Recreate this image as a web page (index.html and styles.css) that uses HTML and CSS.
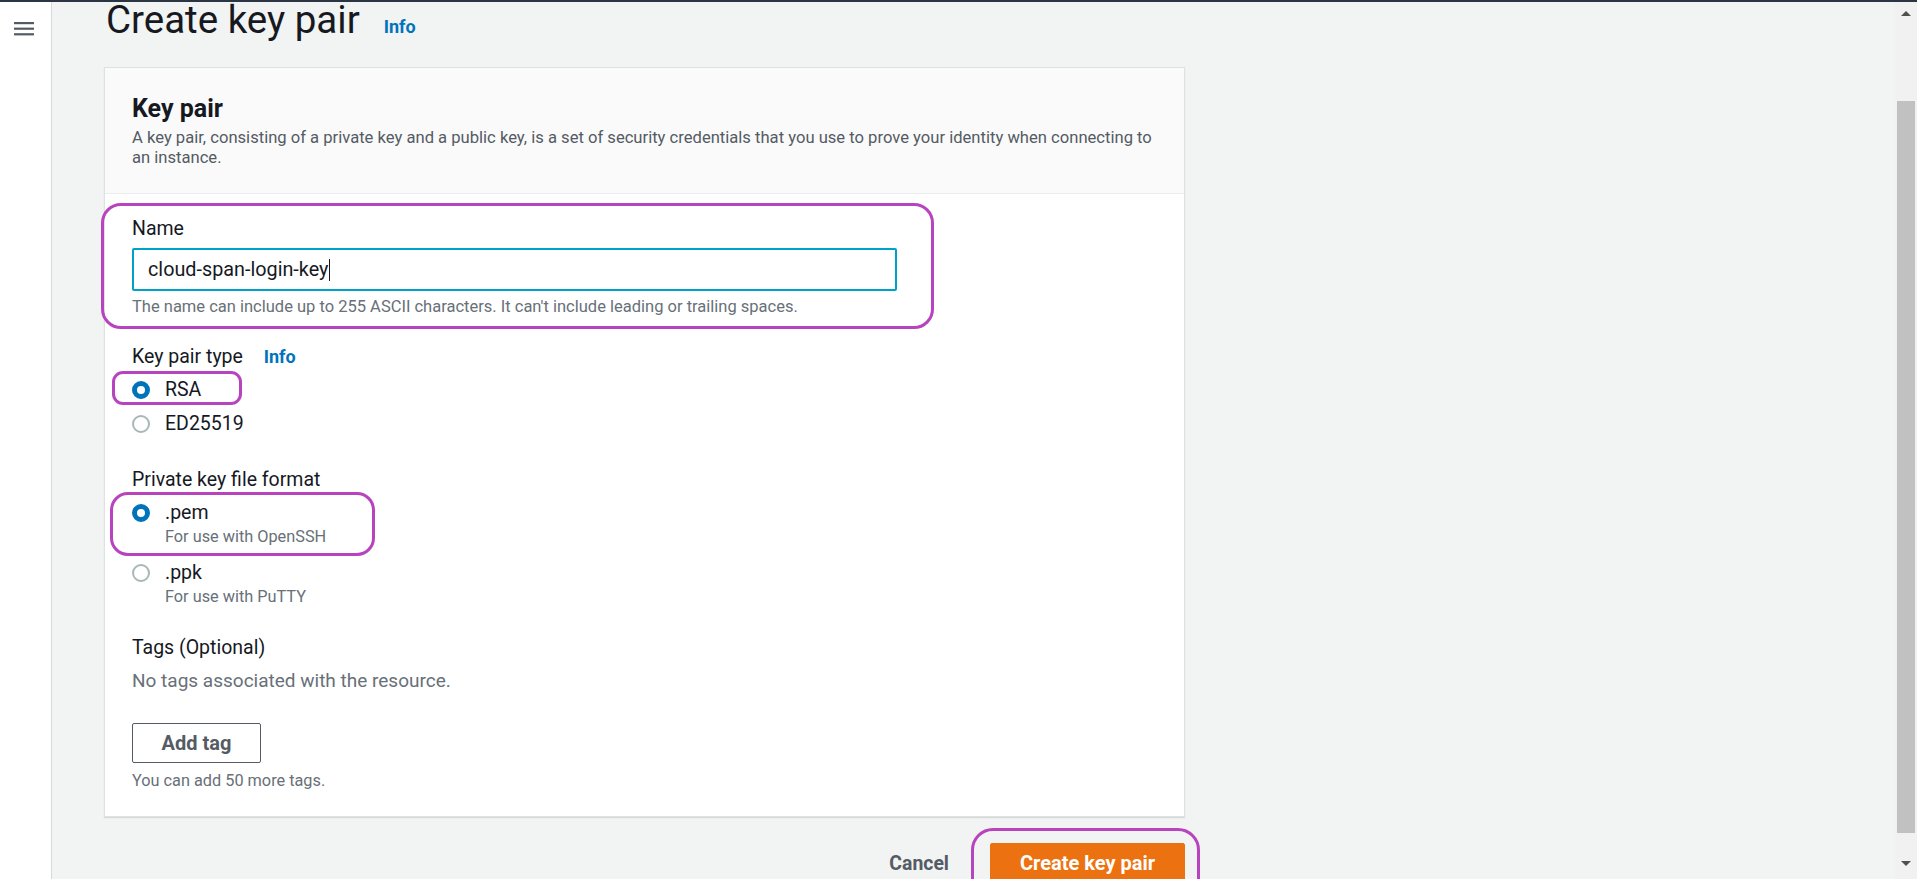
FILE: index.html
```html
<!DOCTYPE html>
<html lang="en">
<head>
<meta charset="utf-8">
<title>Create key pair</title>
<link rel="stylesheet" href="styles.css">
</head>
<body>
<div class="topbar"></div>
<div class="app">
  <nav class="sidebar">
    <svg class="burger" width="20" height="16" viewBox="0 0 20 16" aria-hidden="true">
      <rect x="0" y="1" width="20" height="2.2" fill="#545b64"/>
      <rect x="0" y="6.6" width="20" height="2.2" fill="#545b64"/>
      <rect x="0" y="12.2" width="20" height="2.2" fill="#545b64"/>
    </svg>
  </nav>
  <main class="main">
    <div class="page-head">
      <h1 class="page-title">Create key pair</h1>
      <a class="info" href="#">Info</a>
    </div>
    <section class="card">
      <header class="card-head">
        <h2 class="card-title">Key pair</h2>
        <p class="card-desc">A key pair, consisting of a private key and a public key, is a set of security credentials that you use to prove your identity when connecting to an instance.</p>
      </header>
      <div class="card-body">
        <div class="field field-name">
          <span class="mark mark-name"></span>
          <div class="label">Name</div>
          <div class="input"><span class="input-text">cloud-span-login-key</span><span class="caret"></span></div>
          <p class="hint">The name can include up to 255 ASCII characters. It can't include leading or trailing spaces.</p>
        </div>

        <div class="field field-type">
          <div class="label">Key pair type <a class="info info-small" href="#">Info</a></div>
          <div class="radios">
            <div class="radio-row">
              <span class="mark mark-rsa"></span>
              <span class="radio checked"></span><span class="radio-label">RSA</span>
            </div>
            <div class="radio-row">
              <span class="radio"></span><span class="radio-label">ED25519</span>
            </div>
          </div>
        </div>

        <div class="field field-format">
          <div class="label">Private key file format</div>
          <div class="radios">
            <div class="radio-row radio-tall">
              <span class="mark mark-pem"></span>
              <span class="radio checked"></span>
              <div class="radio-text"><span class="radio-label">.pem</span><span class="radio-desc">For use with OpenSSH</span></div>
            </div>
            <div class="radio-row radio-tall radio-second">
              <span class="radio"></span>
              <div class="radio-text"><span class="radio-label">.ppk</span><span class="radio-desc">For use with PuTTY</span></div>
            </div>
          </div>
        </div>

        <div class="field field-tags">
          <div class="label">Tags (Optional)</div>
          <p class="empty">No tags associated with the resource.</p>
          <button class="btn-normal" type="button">Add tag</button>
          <p class="hint hint-tags">You can add 50 more tags.</p>
        </div>
      </div>
    </section>
    <div class="actions">
      <button class="btn-link" type="button">Cancel</button>
      <div class="primary-wrap">
        <span class="mark mark-create"></span>
        <button class="btn-primary" type="button">Create key pair</button>
      </div>
    </div>
  </main>
  <div class="scrollbar">
    <span class="arrow arrow-up"></span>
    <div class="track"><div class="thumb"></div></div>
    <span class="arrow arrow-down"></span>
  </div>
</div>
</body>
</html>
```

FILE: styles.css
```css
* { box-sizing: border-box; }
html, body {
  margin: 0;
  padding: 0;
  height: 879px;
  overflow: hidden;
  background: #f2f3f3;
  font-family: Roboto, "Open Sans", Arial, sans-serif;
  color: #16191f;
}
p { margin: 0; }

.topbar {
  height: 2px;
  background: #2b3543;
}

.app {
  display: flex;
  height: 877px;
}

.sidebar {
  width: 52px;
  flex: 0 0 52px;
  background: #ffffff;
  border-right: 1px solid #d5dbdb;
  padding: 19px 0 0 14px;
}
.burger { display: block; }

.main {
  flex: 1 1 auto;
  padding-left: 52px;
}

.page-head {
  display: flex;
  align-items: baseline;
  height: 66px;
  margin-top: -1px;
}
.page-title {
  margin: 0 0 0 2px;
  font-size: 38.5px;
  line-height: 38px;
  font-weight: 400;
  color: #16191f;
}
.info {
  color: #0073bb;
  font-weight: 700;
  font-size: 18px;
  text-decoration: none;
  margin-left: 24px;
}
.info-small { margin-left: 16px; }

.card {
  width: 1081px;
  background: #ffffff;
  border: 1px solid #dfe2e2;
  box-shadow: 0 1px 1px rgba(0,28,36,0.12);
}
.card-head {
  background: #fafafa;
  border-bottom: 1px solid #eaeded;
  padding: 26px 20px 25px 27px;
}
.card-title {
  margin: 0;
  font-size: 25px;
  line-height: 30px;
  font-weight: 700;
}
.card-desc {
  margin-top: 4px;
  font-size: 16.6px;
  line-height: 20px;
  color: #545b64;
}

.card-body {
  padding: 23px 20px 25px 27px;
}

.field { position: relative; }
.label {
  font-size: 19.5px;
  line-height: 24px;
  color: #16191f;
}
.input {
  margin-top: 7px;
  width: 765px;
  height: 43px;
  border: 2px solid #00a1c9;
  border-radius: 2px;
  padding-left: 14px;
  display: flex;
  align-items: center;
  font-size: 19.8px;
  color: #16191f;
}
.caret {
  display: inline-block;
  width: 1px;
  height: 22px;
  background: #16191f;
  margin-left: 1px;
}
.hint {
  margin-top: 6px;
  font-size: 16.5px;
  line-height: 20px;
  color: #687078;
}

.field-type { margin-top: 28px; }
.field-format { margin-top: 23px; }
.field-tags { margin-top: 28px; }

.radios { margin-top: 8px; }
.radio-row {
  position: relative;
  display: flex;
  align-items: flex-start;
  height: 34px;
}
.radio {
  flex: 0 0 18px;
  width: 18px;
  height: 18px;
  border-radius: 50%;
  border: 2px solid #aab7b8;
  background: #fff;
  margin-top: 4px;
  margin-right: 15px;
}
.radio.checked {
  border: 5.5px solid #0073bb;
}
.radio-label {
  font-size: 19.5px;
  line-height: 26px;
  color: #16191f;
}
.radio-tall { height: auto; }
.radio-second { margin-top: 12px; }
.radio-text {
  display: flex;
  flex-direction: column;
}
.radio-desc {
  font-size: 16.3px;
  line-height: 22px;
  color: #687078;
}

.empty {
  margin-top: 9px;
  font-size: 19px;
  line-height: 24px;
  color: #687078;
}
.btn-normal {
  margin-top: 30px;
  width: 129px;
  height: 40px;
  background: #ffffff;
  border: 1px solid #545b64;
  border-radius: 2px;
  font-family: inherit;
  font-size: 20px;
  font-weight: 700;
  color: #545b64;
  padding: 0;
}
.hint-tags { margin-top: 8px; font-size: 16.3px; }

.actions {
  width: 1081px;
  display: flex;
  justify-content: flex-end;
  align-items: center;
  gap: 41px;
  margin-top: 26px;
}
.btn-link {
  background: none;
  border: none;
  padding: 0;
  font-family: inherit;
  font-size: 19.4px;
  font-weight: 700;
  color: #545b64;
}
.primary-wrap { position: relative; }
.btn-primary {
  display: block;
  width: 195px;
  height: 40px;
  background: #ec7211;
  border: 1px solid #ec7211;
  border-radius: 2px;
  font-family: inherit;
  font-size: 20px;
  font-weight: 700;
  color: #ffffff;
  padding: 0;
}

/* purple annotation outlines drawn over the form */
.mark {
  position: absolute;
  border: 3px solid #b843bf;
  pointer-events: none;
}
.mark-name {
  left: -31px;
  top: -14px;
  width: 833px;
  height: 126px;
  border-radius: 20px;
}
.mark-rsa {
  left: -20px;
  top: -6px;
  width: 130px;
  height: 34px;
  border-radius: 11px;
}
.mark-pem {
  left: -22px;
  top: -8px;
  width: 265px;
  height: 64px;
  border-radius: 18px;
}
.mark-create {
  left: -19px;
  top: -15px;
  width: 229px;
  height: 80px;
  border-radius: 22px;
}

.scrollbar {
  flex: 0 0 22px;
  width: 22px;
  background: #f1f1f1;
  display: flex;
  flex-direction: column;
  align-items: center;
}
.arrow {
  width: 0;
  height: 0;
  border-left: 5px solid transparent;
  border-right: 5px solid transparent;
}
.arrow-up {
  margin-top: 9px;
  border-bottom: 5px solid #505050;
}
.arrow-down {
  margin-top: 28px;
  border-top: 5px solid #505050;
}
.track {
  width: 18px;
  padding-top: 85px;
}
.thumb {
  height: 732px;
  background: #c1c1c1;
}
```
